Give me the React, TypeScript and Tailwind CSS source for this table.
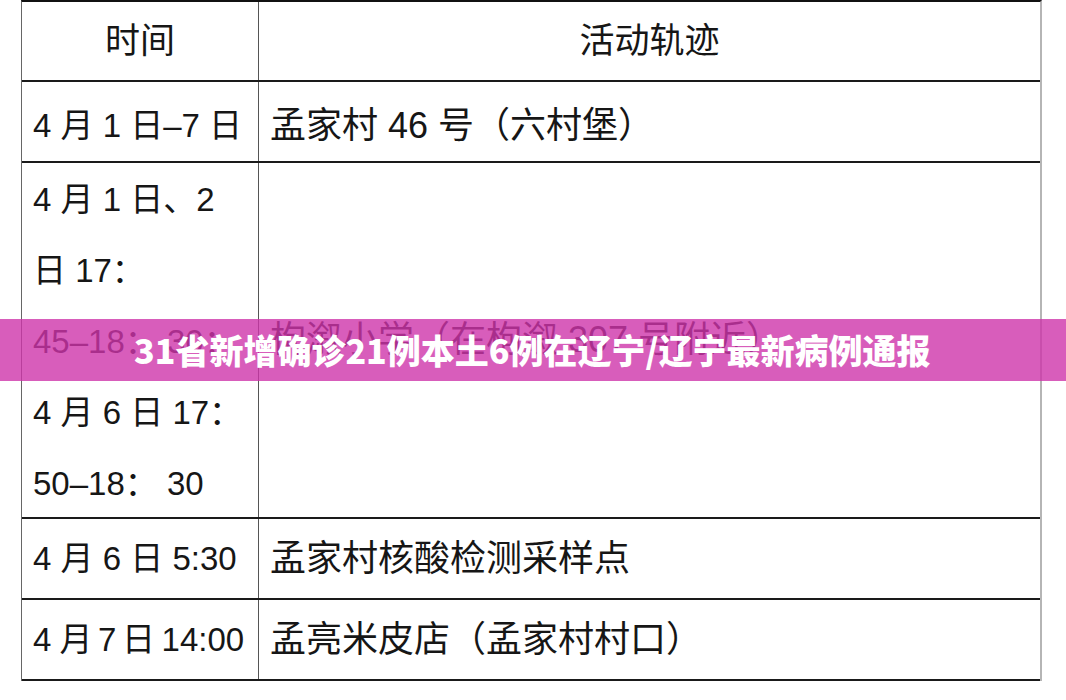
import React from 'react';

const font = '[font-family:"Liberation_Sans","Noto_Sans_CJK_SC",sans-serif]';

// left column cell (time)
const TimeCell: React.FC<{ className?: string; children: React.ReactNode }> = ({ className = '', children }) => (
  <div className={`flex w-[237px] shrink-0 items-center border-r border-[#555] pl-[11px] text-[33px] ${className}`}>
    {children}
  </div>
);

// right column cell (place)
const PlaceCell: React.FC<{ className?: string; children: React.ReactNode }> = ({ className = '', children }) => (
  <div className={`flex flex-1 items-center pl-[11px] text-[36px] ${className}`}>{children}</div>
);

const App: React.FC = () => {
  return (
    <div className={`relative h-[700px] w-[1066px] overflow-hidden bg-white text-[#161616] ${font}`}>
      {/* Table */}
      <div className="ml-[21px] w-[1021px] border-l border-r-2 border-t-2 border-l-[#666] border-r-[#b5b5b5] border-t-[#111]">
        <div className="flex h-[80px] border-b-2 border-[#1a1a1a] text-[35px]">
          <div className="flex w-[237px] shrink-0 items-center justify-center border-r border-[#555]">时间</div>
          <div className="flex flex-1 items-center justify-center">活动轨迹</div>
        </div>
        <div className="flex h-[81px] border-b-2 border-[#1a1a1a]">
          <TimeCell className="pt-[8px]">4 月 1 日–7 日</TimeCell>
          <PlaceCell className="pt-[8px]">孟家村 46 号（六村堡）</PlaceCell>
        </div>
        <div className="flex h-[356px] border-b-2 border-[#1a1a1a]">
          <div className="w-[237px] shrink-0 border-r border-[#555] pl-[11px] pt-[1px] text-[33px] leading-[71px]">
            4 月 1 日、2<br />
            日 17：<br />
            45–18： 30：<br />
            4 月 6 日 17：<br />
            50–18： 30
          </div>
          <PlaceCell className="text-[35px]">枸溆小学（在枸溆 307 号附近）</PlaceCell>
        </div>
        <div className="flex h-[81px] border-b-2 border-[#1a1a1a]">
          <TimeCell>4 月 6 日 5:30</TimeCell>
          <PlaceCell>孟家村核酸检测采样点</PlaceCell>
        </div>
        <div className="flex h-[81px] border-b-2 border-[#1a1a1a]">
          <TimeCell className="whitespace-nowrap">
            4{'\u2005'}月{'\u2006'}7{'\u2006'}日{'\u2009'}14:00
          </TimeCell>
          <PlaceCell>孟亮米皮店（孟家村村口）</PlaceCell>
        </div>
      </div>

      {/* Title banner over the table */}
      <div className="absolute left-0 right-0 top-[319px] flex h-[62px] items-center bg-[rgba(206,52,170,0.8)] pl-[134px]">
        <span className='text-[34px] font-black leading-none text-white [font-family:"Noto_Sans_CJK_SC",sans-serif]'>
          31省新增确诊21例本土6例在辽宁/辽宁最新病例通报
        </span>
      </div>
    </div>
  );
};

export default App;
